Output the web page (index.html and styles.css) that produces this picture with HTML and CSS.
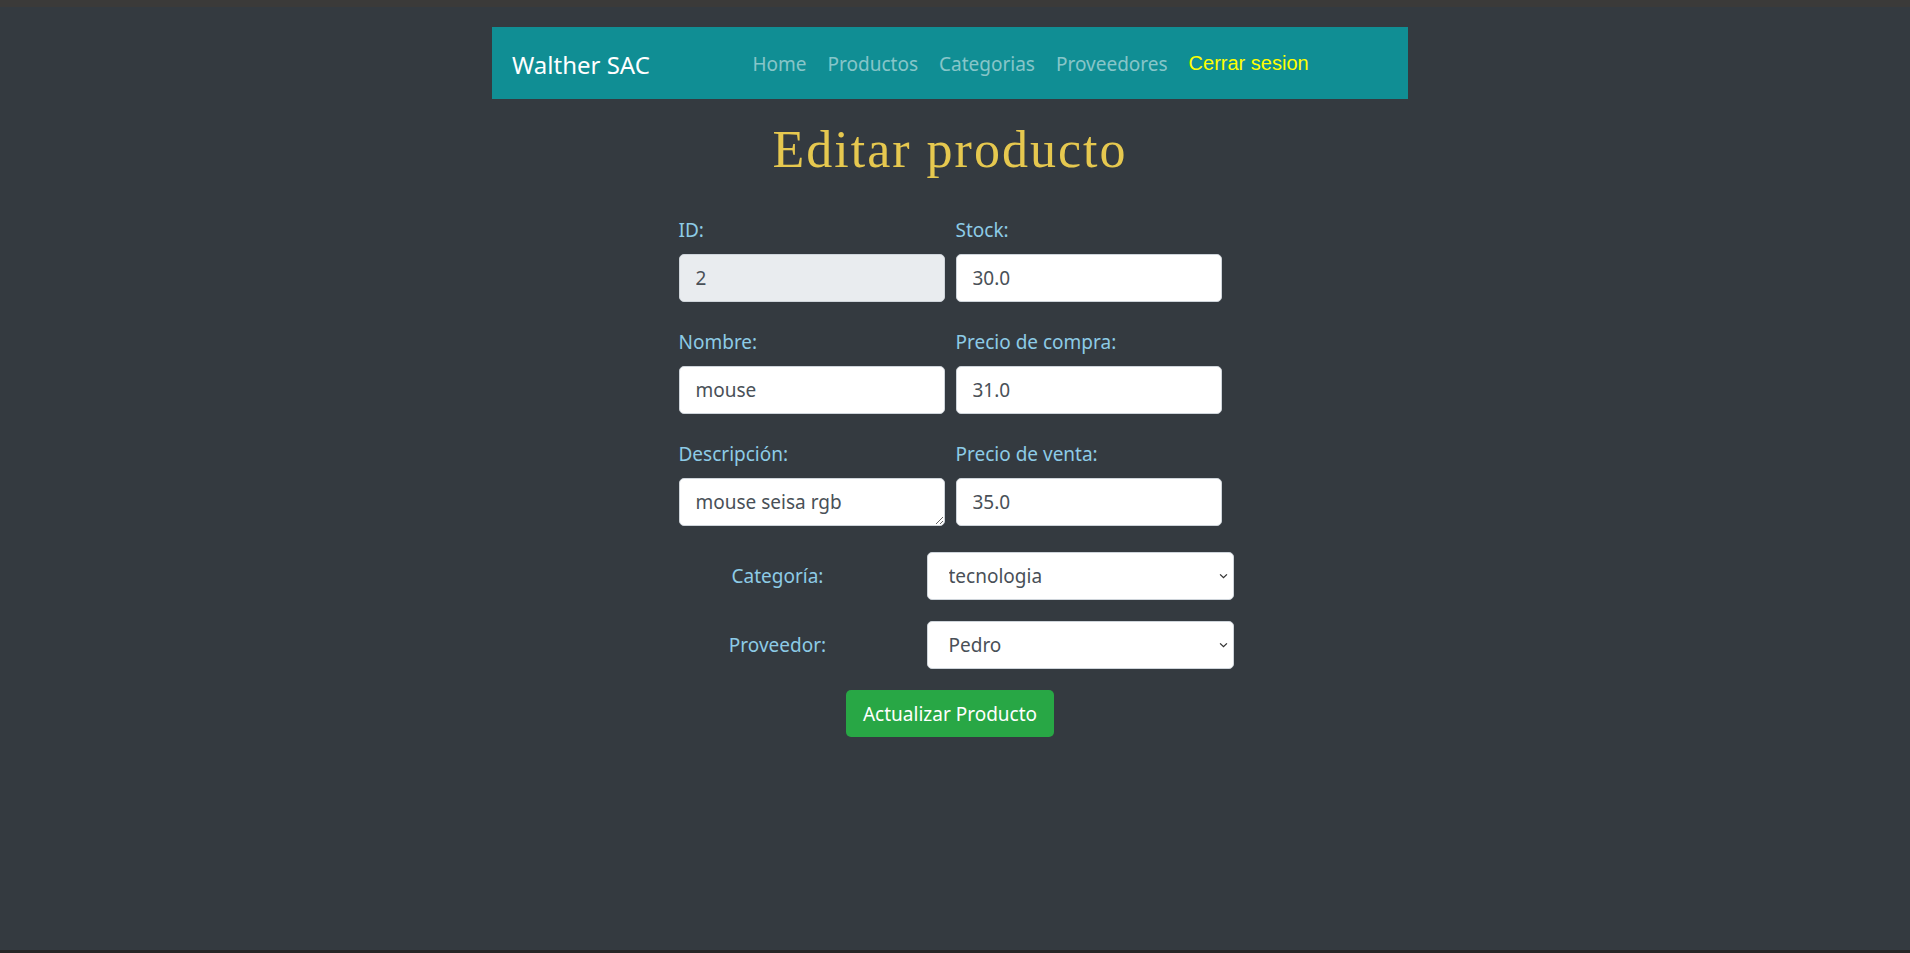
FILE: index.html
```html
<!DOCTYPE html>
<html lang="es">
<head>
<meta charset="utf-8">
<title>Editar producto</title>
<link rel="stylesheet" href="styles.css">
</head>
<body>
<div class="page">
  <nav class="navbar">
    <a class="brand" href="#">Walther SAC</a>
    <ul class="nav">
      <li><a class="nav-link" href="#">Home</a></li>
      <li><a class="nav-link" href="#">Productos</a></li>
      <li><a class="nav-link" href="#">Categorias</a></li>
      <li><a class="nav-link" href="#">Proveedores</a></li>
      <li><a class="nav-link logout" href="#">Cerrar sesion</a></li>
    </ul>
  </nav>
  <main class="main">
    <h1 class="title">Editar producto</h1>
    <form class="form">
      <div class="grid">
        <div class="field">
          <label class="label">ID:</label>
          <input class="control" type="text" value="2" disabled>
        </div>
        <div class="field">
          <label class="label">Stock:</label>
          <input class="control" type="text" value="30.0">
        </div>
        <div class="field">
          <label class="label">Nombre:</label>
          <input class="control" type="text" value="mouse">
        </div>
        <div class="field">
          <label class="label">Precio de compra:</label>
          <input class="control" type="text" value="31.0">
        </div>
        <div class="field">
          <label class="label">Descripción:</label>
          <textarea class="control area" rows="1">mouse seisa rgb</textarea>
        </div>
        <div class="field">
          <label class="label">Precio de venta:</label>
          <input class="control" type="text" value="35.0">
        </div>
      </div>
      <div class="select-row">
        <label class="label side">Categoría:</label>
        <div class="select-wrap">
          <select class="control select"><option>tecnologia</option></select>
          <svg class="chev" viewBox="0 0 10 6" width="9" height="6"><path d="M1.2 1.2l3.8 3.6 3.8-3.6" fill="none" stroke="#333" stroke-width="1.5"/></svg>
        </div>
      </div>
      <div class="select-row">
        <label class="label side">Proveedor:</label>
        <div class="select-wrap">
          <select class="control select"><option>Pedro</option></select>
          <svg class="chev" viewBox="0 0 10 6" width="9" height="6"><path d="M1.2 1.2l3.8 3.6 3.8-3.6" fill="none" stroke="#333" stroke-width="1.5"/></svg>
        </div>
      </div>
      <div class="actions">
        <button class="btn" type="button">Actualizar Producto</button>
      </div>
    </form>
  </main>
</div>
</body>
</html>
```

FILE: styles.css
```css
* { box-sizing: border-box; }
html, body { margin: 0; padding: 0; }
body {
  background: #343a40;
  min-height: 100vh;
  border-top: 7px solid #3b3a39;
  border-bottom: 3px solid #262626;
  font-family: "Noto Sans", "Open Sans", sans-serif;
  font-size: 19px;
}
.page {
  width: 916px;
  margin: 20px 0 0 calc(50% - 463px);
}
.navbar {
  height: 72px;
  background: #108e94;
  display: flex;
  align-items: center;
  padding-left: 20px;
}
.brand {
  width: 230px;
  color: #fff;
  font-size: 24px;
  text-decoration: none;
  margin-top: 2px;
}
.nav {
  display: flex;
  list-style: none;
  margin: 2px 0 0;
  padding: 0;
}
.nav-link {
  display: block;
  padding: 0 10.5px;
  color: rgba(255, 255, 255, 0.5);
  text-decoration: none;
  line-height: 28px;
}
.logout {
  color: #ffff00;
  font-family: "Liberation Sans", Arial, sans-serif;
  font-size: 20px;
  margin-top: -1px;
}
.main {
  width: 916px;
}
.title {
  margin: 21px 0 0;
  text-align: center;
  font-family: "Liberation Serif", "DejaVu Serif", serif;
  font-weight: normal;
  font-size: 52px;
  letter-spacing: 2px;
  line-height: 60px;
  color: #e6c84f;
}
.form {
  width: 543px;
  margin: 36px auto 0;
}
.grid {
  display: grid;
  grid-template-columns: 266px 266px;
  column-gap: 11px;
  row-gap: 26px;
}
.field {
  display: flex;
  flex-direction: column;
}
.label {
  color: #8dcbe6;
  line-height: 28px;
  margin-bottom: 10px;
}
.control {
  height: 48px;
  border: 1px solid #ced4da;
  border-radius: 5px;
  background: #fff;
  color: #495057;
  font-family: "Noto Sans", "Open Sans", sans-serif;
  font-size: 19px;
  padding: 0 16px;
  width: 100%;
}
.control:disabled {
  background: #e9ecef;
  color: #495057;
}
.area {
  resize: vertical;
  line-height: 28px;
  padding-top: 9px;
  padding-bottom: 9px;
  overflow: hidden;
}
.select-row {
  display: grid;
  grid-template-columns: 198px 307px;
  column-gap: 50px;
  align-items: center;
  width: 555px;
  margin-top: 26px;
}
.select-row + .select-row {
  margin-top: 21px;
}
.side {
  margin: 0;
  text-align: center;
}
.select-wrap {
  position: relative;
}
.select {
  -webkit-appearance: none;
  appearance: none;
  padding-left: 21px;
  padding-right: 30px;
}
.chev {
  position: absolute;
  right: 6px;
  top: 21px;
  pointer-events: none;
}
.actions {
  display: flex;
  justify-content: center;
  margin-top: 21px;
}
.btn {
  height: 47px;
  width: 208px;
  border: none;
  border-radius: 5px;
  background: #28a745;
  color: #fff;
  font-family: "Noto Sans", "Open Sans", sans-serif;
  font-size: 19px;
  padding: 0;
}
```
